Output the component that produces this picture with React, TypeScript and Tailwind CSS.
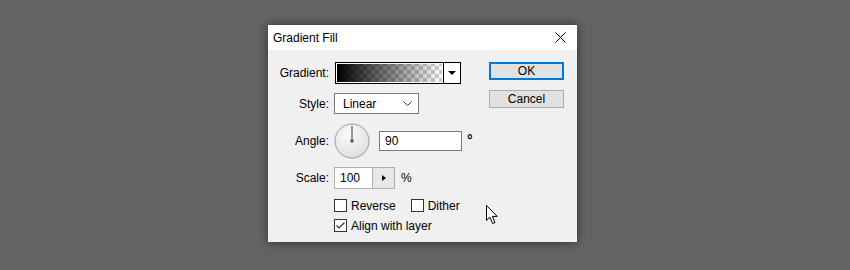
import type { FC, ReactNode } from "react";

const Label: FC<{ children: ReactNode }> = ({ children }) => (
  <div className="w-[62px] shrink-0 pr-[1px] text-right">{children}</div>
);

const Checkbox: FC<{ checked?: boolean; label: string }> = ({ checked, label }) => (
  <div className="flex items-center h-[13px]">
    <div className="w-[13px] h-[13px] border border-[#333333] bg-white flex items-center justify-center">
      {checked && (
        <svg width="11" height="11" viewBox="0 0 11 11">
          <polyline points="1.5,5.5 4,8 9.5,2.5" fill="none" stroke="#333" strokeWidth="1.2" />
        </svg>
      )}
    </div>
    <span className="ml-[4px] leading-none">{label}</span>
  </div>
);

const GradientSwatch: FC = () => (
  <svg width="126" height="22" viewBox="0 0 126 22" className="ml-[1px]">
    <defs>
      <pattern id="checker" width="8" height="8" patternUnits="userSpaceOnUse">
        <rect width="8" height="8" fill="#ffffff" />
        <rect width="4" height="4" fill="#cdcdcd" />
        <rect x="4" y="4" width="4" height="4" fill="#cdcdcd" />
      </pattern>
      <linearGradient id="fade" x1="0" x2="1" y1="0" y2="0">
        <stop offset="0" stopColor="#000" stopOpacity="1" />
        <stop offset="1" stopColor="#000" stopOpacity="0" />
      </linearGradient>
    </defs>
    <rect x="0.5" y="0.5" width="125" height="21" fill="#fff" stroke="#000" />
    <rect x="2" y="2" width="105" height="18" fill="url(#checker)" />
    <rect x="2" y="2" width="105" height="18" fill="url(#fade)" />
    <line x1="108.5" y1="0" x2="108.5" y2="22" stroke="#000" />
    <polygon points="113,9 121,9 117,13" fill="#000" />
  </svg>
);

const Dial: FC = () => (
  <svg width="36" height="36" viewBox="0 0 36 36">
    <defs>
      <radialGradient id="dialFill" cx="0.4" cy="0.3" r="0.8">
        <stop offset="0" stopColor="#fbfbfb" />
        <stop offset="1" stopColor="#dcdcdc" />
      </radialGradient>
    </defs>
    <circle cx="18" cy="18" r="17" fill="url(#dialFill)" stroke="#9a9a9a" />
    <line x1="18" y1="18" x2="18" y2="3" stroke="#555" strokeWidth="1.2" />
    <circle cx="18" cy="18" r="1.8" fill="#555" />
  </svg>
);

const Cursor: FC = () => (
  <svg width="14" height="20" viewBox="0 0 14 20">
    <path
      d="M0.5 0.5 L0.5 15.5 L4 12.2 L6.6 18.5 L9 17.5 L6.4 11.4 L11.2 11.4 Z"
      fill="#fff"
      stroke="#000"
      strokeWidth="1"
      strokeLinejoin="round"
    />
  </svg>
);

export default function App() {
  return (
    <div
      className="w-[850px] h-[270px] bg-[#646464] pt-[25px] pl-[268px] text-[12px] text-black"
      style={{ fontFamily: '"Liberation Sans", Arial, sans-serif' }}
    >
      <div className="relative w-[309px] h-[217px] bg-[#f0f0f0] shadow-[0_0_10px_rgba(0,0,0,0.55)] flex flex-col">
        {/* Title bar */}
        <div className="h-[25px] bg-white flex items-center justify-between pl-[5px] pr-[11px]">
          <span>Gradient Fill</span>
          <svg width="11" height="11" viewBox="0 0 11 11">
            <path d="M0.5 0.5 L10.5 10.5 M10.5 0.5 L0.5 10.5" stroke="#000" strokeWidth="1" />
          </svg>
        </div>

        {/* Body */}
        <div className="flex">
          <div className="w-[221px] flex flex-col">
            <div className="flex items-center gap-[4px] h-[22px] mt-[12px]">
              <Label>Gradient:</Label>
              <GradientSwatch />
            </div>

            <div className="flex items-center gap-[4px] h-[21px] mt-[9px]">
              <Label>Style:</Label>
              <div className="w-[85px] h-[21px] bg-white border border-[#7a7a7a] flex items-center justify-between pl-[8px] pr-[6px]">
                <span>Linear</span>
                <svg width="9" height="6" viewBox="0 0 9 6">
                  <polyline points="0.5,0.5 4.5,4.5 8.5,0.5" fill="none" stroke="#333" strokeWidth="1" />
                </svg>
              </div>
            </div>

            <div className="flex items-center gap-[4px] h-[36px] mt-[9px]">
              <Label>Angle:</Label>
              <Dial />
              <div className="ml-[5px] w-[83px] h-[20px] bg-white border border-[#7a7a7a] flex items-center pl-[5px]">
                90
              </div>
              <span className="ml-[1px] -mt-[3px] text-[14px] font-bold leading-none">°</span>
            </div>

            <div className="flex items-center gap-[4px] h-[22px] mt-[8px]">
              <Label>Scale:</Label>
              <div className="flex h-[22px] border border-[#adadad]">
                <div className="w-[37px] bg-white flex items-center pl-[5px]">100</div>
                <div className="w-[22px] bg-[#e8e8e8] border-l border-[#adadad] flex items-center justify-center">
                  <svg width="4" height="6" viewBox="0 0 4 6">
                    <polygon points="0,0 4,3 0,6" fill="#000" />
                  </svg>
                </div>
              </div>
              <span className="ml-[2px]">%</span>
            </div>

            <div className="flex ml-[66px] mt-[10px] gap-[15px]">
              <Checkbox label="Reverse" />
              <Checkbox label="Dither" />
            </div>

            <div className="flex ml-[66px] mt-[7px]">
              <Checkbox checked label="Align with layer" />
            </div>
          </div>

          <div className="w-[75px] flex flex-col pt-[12px]">
            <button className="h-[18px] w-[75px] bg-[#e1e1e1] border-2 border-[#0078d7] flex items-center justify-center leading-none">
              OK
            </button>
            <button className="mt-[10px] h-[18px] w-[75px] bg-[#e1e1e1] border border-[#adadad] flex items-center justify-center leading-none">
              Cancel
            </button>
          </div>
        </div>

        <div className="absolute left-[218px] top-[180px]">
          <Cursor />
        </div>
      </div>
    </div>
  );
}
